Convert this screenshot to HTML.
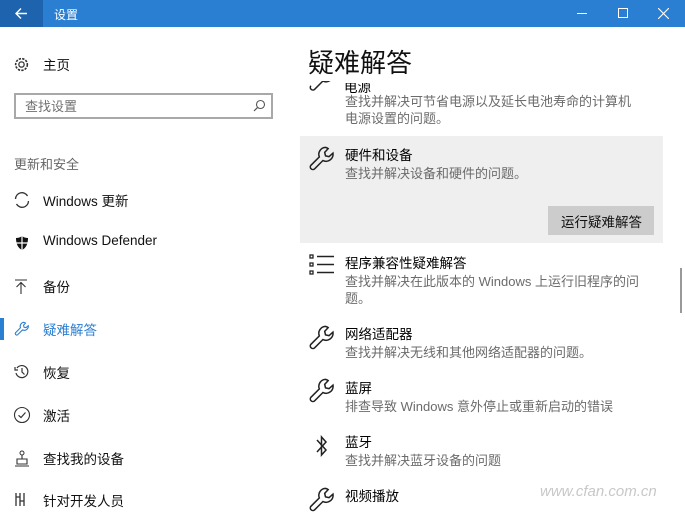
<!DOCTYPE html>
<html><head><meta charset="utf-8"><style>
*{margin:0;padding:0;box-sizing:border-box}
body{width:685px;height:507px;overflow:hidden;background:#fff;position:relative;font-family:"Liberation Sans","Noto Sans CJK SC",sans-serif;color:#000}
.a{position:absolute;white-space:nowrap}
.t{font-size:13.5px;margin-top:-2px}
.d{font-size:13px;color:#6b6b6b;margin-top:-2px}
.s{font-size:13.5px;color:#111;margin-top:-2px}
svg{position:absolute}
</style></head><body>
<div class="a" style="left:0;top:0;width:685px;height:27px;background:#2b7fd2"></div>
<div class="a" style="left:0;top:0;width:43px;height:27px;background:#1e63ad"></div>
<svg style="left:14px;top:6px" width="15" height="15" viewBox="0 0 15 15"><path d="M13 7.5H2M7 2.5L2 7.5l5 5" stroke="#fff" stroke-width="1.4" fill="none"/></svg>
<div class="a" style="left:54px;top:6px;font-size:12px;color:#fff">设置</div>
<div class="a" style="left:577px;top:13px;width:10px;height:1px;background:#fff"></div>
<div class="a" style="left:618px;top:8px;width:10px;height:10px;border:1px solid #fff"></div>
<svg style="left:658px;top:8px" width="11" height="11"><path d="M0 0L11 11M11 0L0 11" stroke="#fff" stroke-width="1.1"/></svg>

<svg style="left:13px;top:56px" width="17" height="17" viewBox="0 0 16 16"><circle cx="8" cy="8" r="2.5" fill="none" stroke="#333" stroke-width="1.2"/><circle cx="8" cy="8" r="5.5" fill="none" stroke="#333" stroke-width="1.5" stroke-dasharray="2.2 1.1"/></svg>
<div class="a s" style="left:43px;top:56px">主页</div>
<div class="a" style="left:14px;top:93px;width:259px;height:26px;border:2px solid #a8a8a8"></div>
<div class="a" style="left:25px;top:96px;font-size:13px;color:#707070">查找设置</div>
<svg style="left:253px;top:99px" width="13" height="13"><circle cx="7.5" cy="5.5" r="4" fill="none" stroke="#555" stroke-width="1.1"/><path d="M4.7 8.3L1 12" stroke="#555" stroke-width="1.2"/></svg>
<div class="a" style="left:14px;top:154px;font-size:13px;color:#666">更新和安全</div>

<svg style="left:13px;top:191px" width="18" height="18"><path d="M2.5 8A6.4 6.4 0 0 1 14.5 5M15.5 10A6.4 6.4 0 0 1 3.5 13" fill="none" stroke="#333" stroke-width="1.3"/></svg>
<div class="a s" style="left:43px;top:192px">Windows 更新</div>
<svg style="left:14px;top:235px" width="16" height="16"><path d="M8 1C6 2.5 4 3 2 3c0 6 2 10 6 12 4-2 6-6 6-12-2 0-4-.5-6-2z" fill="#111"/><path d="M8 1V15M2 8H14" stroke="#fff" stroke-width="1.2"/></svg>
<div class="a s" style="left:43px;top:235px">Windows Defender</div>
<svg style="left:14px;top:279px" width="14" height="16"><path d="M1 1H13M7 3V15M2.5 8L7 3.5 11.5 8" fill="none" stroke="#333" stroke-width="1.1"/></svg>
<div class="a s" style="left:43px;top:278px">备份</div>
<div class="a" style="left:0;top:318px;width:4px;height:22px;background:#2b7fd2"></div>
<svg style="left:14px;top:321px" width="16" height="16" viewBox="0 0 24 24"><path d="M15 2a6 6 0 0 0-5.3 8.2L2.5 17.4a2.2 2.2 0 0 0 3.1 3.1l7.2-7.2A6 6 0 0 0 21.4 7l-3.4 3-3-.7-.7-3 3-3.2A6 6 0 0 0 15 2z" fill="none" stroke="#2b7fd2" stroke-width="1.6"/></svg>
<div class="a s" style="left:43px;top:321px;color:#2b7fd2">疑难解答</div>
<svg style="left:14px;top:364px" width="16" height="16"><path d="M3 4A6 6 0 1 1 2 9M1 3V6H4M8 4V8L10.5 10.5" fill="none" stroke="#333" stroke-width="1.2"/></svg>
<div class="a s" style="left:43px;top:364px">恢复</div>
<svg style="left:13px;top:406px" width="18" height="18"><circle cx="9" cy="9" r="7.5" fill="none" stroke="#333" stroke-width="1.1"/><path d="M5.5 9.3L8 11.5 12.5 6.5" fill="none" stroke="#333" stroke-width="1.2"/></svg>
<div class="a s" style="left:43px;top:407px">激活</div>
<svg style="left:14px;top:450px" width="16" height="17"><circle cx="8" cy="3" r="2" fill="none" stroke="#333"/><path d="M8 5V9M3 9H13V14H3ZM1 16H15" fill="none" stroke="#333" stroke-width="1.1"/></svg>
<div class="a s" style="left:43px;top:450px">查找我的设备</div>
<svg style="left:14px;top:492px" width="14" height="15"><path d="M2 1V14M6 1V14M10 1V14M2 5H6M6 9H10" fill="none" stroke="#333" stroke-width="1.3"/></svg>
<div class="a s" style="left:43px;top:492px">针对开发人员</div>

<div class="a" style="left:300px;top:136px;width:363px;height:107px;background:#efefef"></div>
<div class="a" style="left:548px;top:206px;width:106px;height:29px;background:#cccccc"></div>
<div class="a" style="left:561px;top:211px;font-size:13.5px;color:#111">运行疑难解答</div>

<div class="a" style="left:344px;top:76px;font-size:13.5px;clip-path:inset(7px 0 0 0)">电源</div>
<svg style="left:308px;top:76px" width="28" height="28" viewBox="0 0 24 24"><path d="M2.5 17.4a2.2 2.2 0 0 0 3.1 3.1l7.2-7.2A6 6 0 0 0 21.4 7" fill="none" stroke="#222" stroke-width="1.3" transform="translate(0,-9)"/></svg>
<div class="a" style="left:300px;top:40px;width:300px;height:41px;background:#fff"></div>
<div class="a" style="left:308px;top:43px;font-size:26px;color:#111">疑难解答</div>
<div class="a d" style="left:345px;top:93px">查找并解决可节省电源以及延长电池寿命的计算机</div>
<div class="a d" style="left:345px;top:110px">电源设置的问题。</div>

<svg style="left:308px;top:145px" width="28" height="28" viewBox="0 0 24 24"><path d="M15 2a6 6 0 0 0-5.3 8.2L2.5 17.4a2.2 2.2 0 0 0 3.1 3.1l7.2-7.2A6 6 0 0 0 21.4 7l-3.4 3-3-.7-.7-3 3-3.2A6 6 0 0 0 15 2z" fill="none" stroke="#222" stroke-width="1.3"/></svg>
<div class="a t" style="left:345px;top:146px">硬件和设备</div>
<div class="a d" style="left:345px;top:165px">查找并解决设备和硬件的问题。</div>

<svg style="left:309px;top:254px" width="26" height="22"><g fill="none" stroke="#222" stroke-width="1.3"><rect x="1" y="1" width="3" height="3"/><rect x="1" y="9" width="3" height="3"/><rect x="1" y="17" width="3" height="3"/></g><path d="M8 2.5H25M8 10.5H25M8 18.5H25" stroke="#222" stroke-width="1.5"/></svg>
<div class="a t" style="left:345px;top:254px">程序兼容性疑难解答</div>
<div class="a d" style="left:345px;top:273px">查找并解决在此版本的 Windows 上运行旧程序的问</div>
<div class="a d" style="left:345px;top:290px">题。</div>

<svg style="left:308px;top:324px" width="28" height="28" viewBox="0 0 24 24"><path d="M15 2a6 6 0 0 0-5.3 8.2L2.5 17.4a2.2 2.2 0 0 0 3.1 3.1l7.2-7.2A6 6 0 0 0 21.4 7l-3.4 3-3-.7-.7-3 3-3.2A6 6 0 0 0 15 2z" fill="none" stroke="#222" stroke-width="1.3"/></svg>
<div class="a t" style="left:345px;top:325px">网络适配器</div>
<div class="a d" style="left:345px;top:344px">查找并解决无线和其他网络适配器的问题。</div>

<svg style="left:308px;top:377px" width="28" height="28" viewBox="0 0 24 24"><path d="M15 2a6 6 0 0 0-5.3 8.2L2.5 17.4a2.2 2.2 0 0 0 3.1 3.1l7.2-7.2A6 6 0 0 0 21.4 7l-3.4 3-3-.7-.7-3 3-3.2A6 6 0 0 0 15 2z" fill="none" stroke="#222" stroke-width="1.3"/></svg>
<div class="a t" style="left:345px;top:379px">蓝屏</div>
<div class="a d" style="left:345px;top:398px">排查导致 Windows 意外停止或重新启动的错误</div>

<svg style="left:315px;top:434px" width="14" height="24"><path d="M2 6L11 16 6.5 21V3L11 8 2 18" fill="none" stroke="#222" stroke-width="1.5"/></svg>
<div class="a t" style="left:345px;top:433px">蓝牙</div>
<div class="a d" style="left:345px;top:452px">查找并解决蓝牙设备的问题</div>

<svg style="left:308px;top:486px" width="28" height="28" viewBox="0 0 24 24"><path d="M15 2a6 6 0 0 0-5.3 8.2L2.5 17.4a2.2 2.2 0 0 0 3.1 3.1l7.2-7.2A6 6 0 0 0 21.4 7l-3.4 3-3-.7-.7-3 3-3.2A6 6 0 0 0 15 2z" fill="none" stroke="#222" stroke-width="1.3"/></svg>
<div class="a t" style="left:345px;top:487px">视频播放</div>
<div class="a" style="left:540px;top:483px;font-size:15px;font-style:italic;color:#c8c8c8">www.cfan.com.cn</div>
<div class="a" style="left:680px;top:268px;width:2px;height:45px;background:#999"></div>
</body></html>
